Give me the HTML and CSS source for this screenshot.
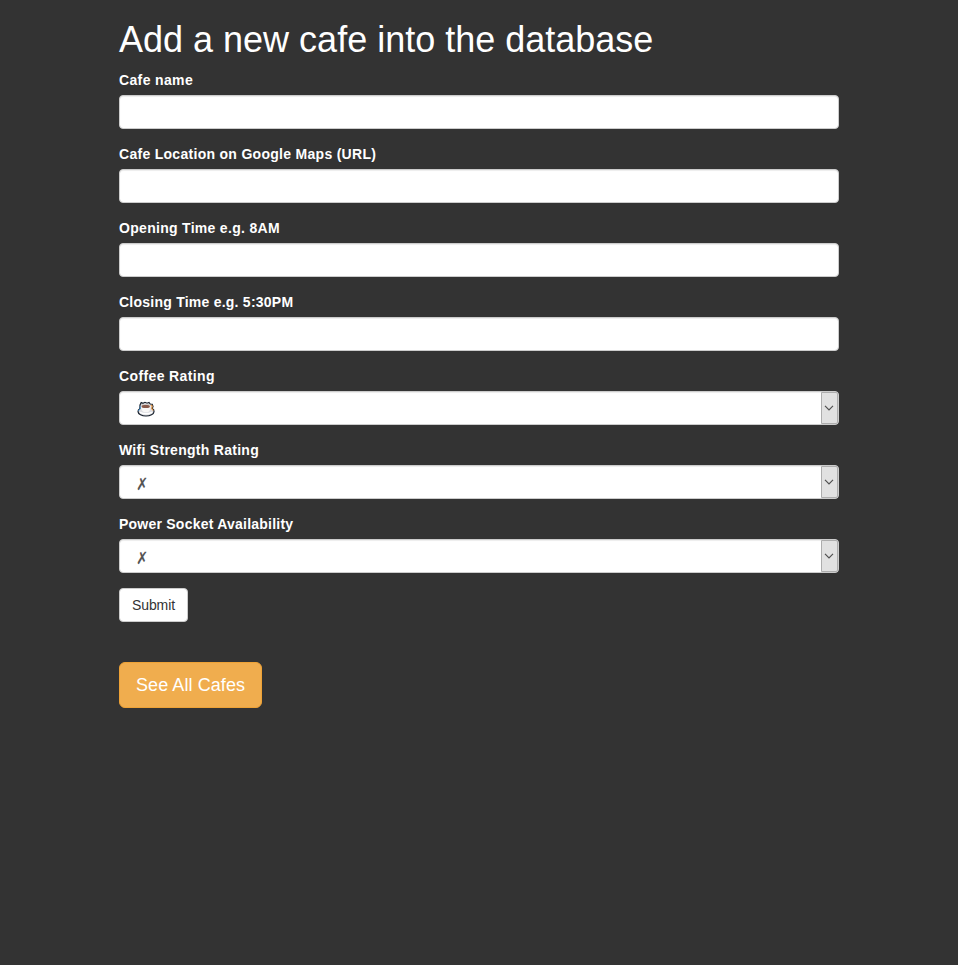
FILE: index.html
```html
<!DOCTYPE html>
<html lang="en">
<head>
<meta charset="utf-8">
<title>Add a new cafe</title>
<link rel="stylesheet" href="styles.css">
</head>
<body>
<main class="container">
  <h1>Add a new cafe into the database</h1>
  <form>
    <div class="form-group"><label for="name"><span class="t-name">Cafe name</span></label><input class="form-control" id="name" type="text"></div>
    <div class="form-group"><label for="location"><span class="t-location">Cafe Location on Google Maps (URL)</span></label><input class="form-control" id="location" type="text"></div>
    <div class="form-group"><label for="open"><span class="t-open">Opening Time e.g. 8AM</span></label><input class="form-control" id="open" type="text"></div>
    <div class="form-group"><label for="close"><span class="t-close">Closing Time e.g. 5:30PM</span></label><input class="form-control" id="close" type="text"></div>
    <div class="form-group">
      <label><span class="t-coffee">Coffee Rating</span></label>
      <div class="form-control select" role="combobox" tabindex="0">
        <span class="value"><svg class="cup" width="18" height="16" viewBox="0 0 18 16">
          <path d="M3 4 4.2 1.5 6 2.3 8 1.3 10 2.2 12 1.5 13.2 3 15.2 3.2 16 5.5 15.2 7.5C18 9 17.5 12.5 14.5 13.8 11.5 15.3 6.5 15.3 3.5 13.8.3 12.2.3 9 2.8 7.8Z" fill="#dedee2" stroke="#17202c" stroke-width="1.2"/>
          <path d="M13.8 4 15.2 5 14.6 7.5 16.3 9.5" fill="none" stroke="#e99a48" stroke-width="1.1"/>
          <path d="M1.5 9.8 3.2 7.5V5" fill="none" stroke="#3b8cca" stroke-width="1"/>
          <path d="M3.8 5.2C4 9 5.8 11.3 9 11.3S13.4 9 13.6 5.2Z" fill="#f8f7f6"/>
          <ellipse cx="8.7" cy="5.4" rx="4.2" ry="1.6" fill="#88594a"/>
          <path d="M4.2 3.7Q8.5 2.6 13 3.7" fill="none" stroke="#d4d0cd"/>
          <path d="M3 11.3Q9 14.3 15 11.3" fill="none" stroke="#fff" stroke-width="1.4"/>
        </svg></span>
        <span class="arrow"><svg width="10" height="6" viewBox="0 0 10 6"><path d="M1 .8 5 4.8 9 .8"/></svg></span>
      </div>
    </div>
    <div class="form-group">
      <label><span class="t-wifi">Wifi Strength Rating</span></label>
      <div class="form-control select" role="combobox" tabindex="0">
        <span class="value mark">✗</span>
        <span class="arrow"><svg width="10" height="6" viewBox="0 0 10 6"><path d="M1 .8 5 4.8 9 .8"/></svg></span>
      </div>
    </div>
    <div class="form-group">
      <label><span class="t-power">Power Socket Availability</span></label>
      <div class="form-control select" role="combobox" tabindex="0">
        <span class="value mark">✗</span>
        <span class="arrow"><svg width="10" height="6" viewBox="0 0 10 6"><path d="M1 .8 5 4.8 9 .8"/></svg></span>
      </div>
    </div>
    <button class="btn btn-default" type="button">Submit</button>
  </form>
  <a class="btn btn-warning" href="#">See All Cafes</a>
</main>
</body>
</html>
```
FILE: styles.css
```css
* { box-sizing: border-box; }
body {
  margin: 0;
  min-height: 100vh;
  background: #333;
  color: #fff;
  font: 14px/20px "Liberation Sans", Arial, sans-serif;
}
.container { width: 720px; margin: 0 auto; padding-top: 20px; }
h1 { margin: 0 0 10px; font-size: 36px; font-weight: 400; line-height: 40px; white-space: nowrap; }
.form-group { margin-bottom: 15px; }
label { display: block; margin-bottom: 5px; font-weight: 700; }
.t-name { letter-spacing: .36px; }
.t-location { letter-spacing: .29px; }
.t-open { letter-spacing: .3px; }
.t-close { letter-spacing: .24px; }
.t-coffee { letter-spacing: .38px; }
.t-wifi { letter-spacing: .28px; }
.t-power { letter-spacing: .23px; }
.form-control {
  display: block;
  width: 100%;
  height: 34px;
  padding: 6px 12px;
  border: 1px solid #ccc;
  border-radius: 4px;
  background: #fff;
  color: #555;
  font: inherit;
  box-shadow: inset 0 1px 1px rgba(0, 0, 0, .075);
}
.select { display: flex; justify-content: space-between; padding: 0 0 0 17px; }
.value { display: flex; align-items: center; padding-top: 2px; font: 14px/20px "DejaVu Sans", sans-serif; }
.mark { padding-top: 4px; font-size: 17px; transform: scaleX(.86); transform-origin: left; margin-left: -1.5px; }
.arrow {
  display: flex;
  align-items: center;
  justify-content: center;
  width: 17px;
  padding-right: 1px;
  border: 1px solid #adadad;
  border-radius: 0 2px 2px 0;
  background: #e1e1e1;
}
.arrow svg { flex: none; }
.arrow path { fill: none; stroke: #505050; stroke-width: 1.2; }
.btn {
  display: block;
  width: fit-content;
  border: 1px solid #ccc;
  border-radius: 4px;
  padding: 6px 12px;
  font: inherit;
  text-decoration: none;
  white-space: nowrap;
}
.btn-default { height: 34px; background: #fff; color: #333; letter-spacing: -.1px; }
.btn-warning {
  height: 46px;
  margin-top: 40px;
  padding: 10px 16px;
  border-color: #eea236;
  border-radius: 6px;
  background: #f0ad4e;
  color: #fff;
  font-size: 18px;
  line-height: 24px;
  letter-spacing: .08px;
}
```
